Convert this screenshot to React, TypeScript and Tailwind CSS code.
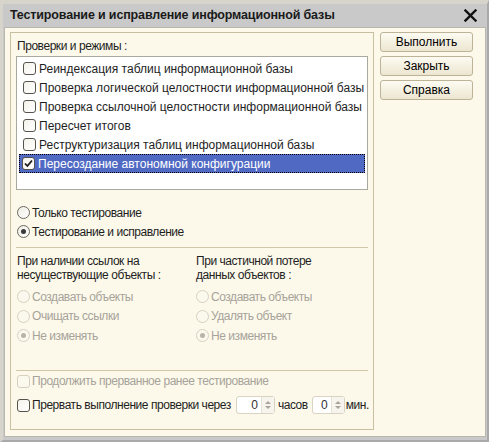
import React from "react";

const FONT = "font-['Liberation_Sans',Arial,sans-serif]";

function Check({ checked = false, disabled = false }: { checked?: boolean; disabled?: boolean }) {
  return (
    <span
      className={
        disabled
          ? "w-[13px] h-[13px] rounded-[3px] border border-[#d6d1bf] bg-[#fbf9ee] shrink-0 flex items-center justify-center"
          : "w-[13px] h-[13px] rounded-[3px] border border-[#55534c] bg-gradient-to-br from-[#f4f2ea] to-white shrink-0 flex items-center justify-center"
      }
    >
      {checked && (
        <svg width="9" height="9" viewBox="0 0 9 9">
          <path d="M1 4.5 L3.4 7 L8 1.5" fill="none" stroke="#1a1a1a" strokeWidth="1.8" />
        </svg>
      )}
    </span>
  );
}

function Radio({ checked = false, disabled = false }: { checked?: boolean; disabled?: boolean }) {
  return (
    <span
      className={
        disabled
          ? "w-[13px] h-[13px] rounded-full border border-[#d6d1bf] bg-[#fbf9ee] shrink-0 flex items-center justify-center"
          : "w-[13px] h-[13px] rounded-full border border-[#6b6960] bg-gradient-to-br from-[#eeece4] to-white shrink-0 flex items-center justify-center"
      }
    >
      {checked && (
        <span
          className={
            disabled
              ? "w-[5px] h-[5px] rounded-full bg-[#b8b4a6]"
              : "w-[5px] h-[5px] rounded-full bg-[#3a3a3a]"
          }
        />
      )}
    </span>
  );
}

function Btn({ children }: { children: React.ReactNode }) {
  return (
    <div className="h-[20px] rounded-[3px] border border-[#bdb497] bg-gradient-to-b from-[#fdfbf2] to-[#ece6d0] flex items-center justify-center text-[12px] text-black">
      {children}
    </div>
  );
}

function Spin({ width }: { width: string }) {
  return (
    <div className={`${width} h-[18px] rounded-[3px] border border-[#d9d4c2] bg-white flex items-stretch`}>
      <div className="flex-1 flex items-center justify-end pr-[3px] text-[12px] text-[#333]">0</div>
      <div className="w-[13px] border-l border-[#e6e2d4] bg-[#f6f4ec] flex flex-col items-center justify-center gap-[2px]">
        <svg width="6" height="3" viewBox="0 0 6 3"><path d="M0 3 L3 0 L6 3 Z" fill="#a8a49a" /></svg>
        <svg width="6" height="3" viewBox="0 0 6 3"><path d="M0 0 L3 3 L6 0 Z" fill="#a8a49a" /></svg>
      </div>
    </div>
  );
}

const items = [
  "Реиндексация таблиц информационной базы",
  "Проверка логической целостности информационной базы",
  "Проверка ссылочной целостности информационной базы",
  "Пересчет итогов",
  "Реструктуризация таблиц информационной базы",
  "Пересоздание автономной конфигурации",
];

export default function App() {
  return (
    <div className={`${FONT} w-[489px] h-[442px] bg-[#c9c9c9] border-t-[4px] border-l-[3px] border-r-[2px] border-b-[2px] border-t-[#d7d4cb] border-l-[#d7d4cb] border-r-[#a9a9a9] border-b-[#a9a9a9] flex flex-col whitespace-nowrap`}>
      {/* Title bar */}
      <div className="h-[23px] flex items-center justify-between pl-[7px] pr-[10px] shrink-0">
        <span className="text-[12.5px] font-bold text-[#1a1a1a] tracking-[-0.15px]">
          Тестирование и исправление информационной базы
        </span>
        <svg width="13" height="13" viewBox="0 0 13 13">
          <path d="M1.5 1.5 L11.5 11.5 M11.5 1.5 L1.5 11.5" stroke="#111" strokeWidth="2.4" strokeLinecap="square" />
        </svg>
      </div>
      {/* Content */}
      <div className="flex-1 mx-[1px] mb-[3px] bg-[#fcf9ea] border border-[#b9b7ae] flex gap-[6px] pl-[5px] pr-[8px] pt-[4px]">
        {/* Group box */}
        <div className="w-[364px] h-[398px] border border-[#c7bf9f] flex flex-col px-[5px] text-[12px] text-[#1e1e1e] tracking-[-0.45px]">
          <div className="pt-[6px] pl-[1px] leading-[14px]">Проверки и режимы :</div>
          <div className="mt-[3px] h-[134px] border border-[#a9a9a0] bg-white px-[2px] pt-[2px] flex flex-col overflow-hidden tracking-normal">
            {items.map((t, i) =>
              i === 5 ? (
                <div
                  key={t}
                  className="h-[19px] flex items-center gap-[3px] pl-[2px] bg-[#506ac4] border border-dotted border-black text-white"
                >
                  <Check checked />
                  <span>{t}</span>
                </div>
              ) : (
                <div key={t} className="h-[19px] flex items-center gap-[3px] pl-[3px] border border-transparent">
                  <Check />
                  <span>{t}</span>
                </div>
              )
            )}
          </div>
          <div className="mt-[13px] flex flex-col pl-[1px]">
            <div className="h-[19px] flex items-center gap-[2px]">
              <Radio />
              <span>Только тестирование</span>
            </div>
            <div className="h-[19px] flex items-center gap-[2px]">
              <Radio checked />
              <span>Тестирование и исправление</span>
            </div>
          </div>
          <div className="mt-[6px] h-[1px] bg-[#cfc7a8]" />
          <div className="mt-[6px] flex pl-[1px]">
            <div className="w-[179px] flex flex-col">
              <div className="leading-[14px]">При наличии ссылок на</div>
              <div className="leading-[14px]">несуществующие объекты :</div>
              <div className="mt-[5px] flex flex-col text-[#a7a39a]">
                <div className="h-[19.5px] flex items-center gap-[2px]"><Radio disabled /><span>Создавать объекты</span></div>
                <div className="h-[19.5px] flex items-center gap-[2px]"><Radio disabled /><span>Очищать ссылки</span></div>
                <div className="h-[19.5px] flex items-center gap-[2px]"><Radio disabled checked /><span>Не изменять</span></div>
              </div>
            </div>
            <div className="flex-1 flex flex-col">
              <div className="leading-[14px]">При частичной потере</div>
              <div className="leading-[14px]">данных объектов :</div>
              <div className="mt-[5px] flex flex-col text-[#a7a39a]">
                <div className="h-[19.5px] flex items-center gap-[2px]"><Radio disabled /><span>Создавать объекты</span></div>
                <div className="h-[19.5px] flex items-center gap-[2px]"><Radio disabled /><span>Удалять объект</span></div>
                <div className="h-[19.5px] flex items-center gap-[2px]"><Radio disabled checked /><span>Не изменять</span></div>
              </div>
            </div>
          </div>
          <div className="mt-[24px] h-[1px] bg-[#cfc7a8]" />
          <div className="mt-[1px] pl-[1px] h-[19px] flex items-center gap-[2px] text-[#a7a39a]">
            <Check disabled />
            <span>Продолжить прерванное ранее тестирование</span>
          </div>
          <div className="mt-[5px] pl-[1px] h-[19px] flex items-center">
            <Check />
            <span className="ml-[2px]">Прервать выполнение проверки через</span>
            <span className="ml-[5px] shrink-0 tracking-normal"><Spin width="w-[39px]" /></span>
            <span className="ml-[3px]">часов</span>
            <span className="ml-[4px] shrink-0 tracking-normal"><Spin width="w-[33px]" /></span>
            <span className="ml-[1px]">мин.</span>
          </div>
        </div>
        {/* Buttons */}
        <div className="w-[93px] flex flex-col gap-[4px]">
          <Btn>Выполнить</Btn>
          <Btn>Закрыть</Btn>
          <Btn>Справка</Btn>
        </div>
      </div>
    </div>
  );
}
